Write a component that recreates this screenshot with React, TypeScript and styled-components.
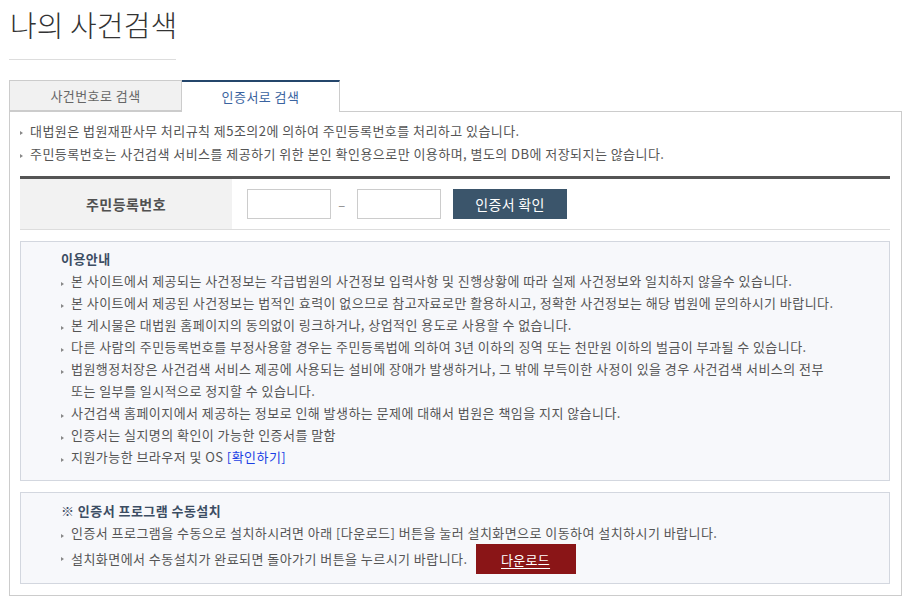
import styled, { createGlobalStyle } from 'styled-components'

const GlobalStyle = createGlobalStyle`
  html, body {
    margin: 0;
    padding: 0;
    background: #fff;
  }
  body {
    font-family: "Noto Sans CJK KR", "Noto Sans", sans-serif;
    color: #555;
  }
`

const notices = [
  '대법원은 법원재판사무 처리규칙 제5조의2에 의하여 주민등록번호를 처리하고 있습니다.',
  '주민등록번호는 사건검색 서비스를 제공하기 위한 본인 확인용으로만 이용하며, 별도의 DB에 저장되지는 않습니다.',
]

const guides = [
  '본 사이트에서 제공되는 사건정보는 각급법원의 사건정보 입력사항 및 진행상황에 따라 실제 사건정보와 일치하지 않을수 있습니다.',
  '본 사이트에서 제공된 사건정보는 법적인 효력이 없으므로 참고자료로만 활용하시고, 정확한 사건정보는 해당 법원에 문의하시기 바랍니다.',
  '본 게시물은 대법원 홈페이지의 동의없이 링크하거나, 상업적인 용도로 사용할 수 없습니다.',
  '다른 사람의 주민등록번호를 부정사용할 경우는 주민등록법에 의하여 3년 이하의 징역 또는 천만원 이하의 벌금이 부과될 수 있습니다.',
]

export default function App() {
  return (
    <Page>
      <GlobalStyle />
      <Title>나의 사건검색</Title>
      <TitleRule />

      <Tabs>
        <Tab>사건번호로 검색</Tab>
        <Tab $active>인증서로 검색</Tab>
      </Tabs>

      <Panel>
        <NoticeList>
          {notices.map((n) => (
            <Item key={n}>{n}</Item>
          ))}
        </NoticeList>

        <FormTable>
          <Label>주민등록번호</Label>
          <Field>
            <Input />
            <Dash>–</Dash>
            <Input />
            <ConfirmButton>인증서 확인</ConfirmButton>
          </Field>
        </FormTable>

        <InfoBox $top={6} $bottom={12}>
          <BoxTitle>이용안내</BoxTitle>
          <List>
            {guides.map((g) => (
              <Item key={g}>{g}</Item>
            ))}
            <Item>
              법원행정처장은 사건검색 서비스 제공에 사용되는 설비에 장애가 발생하거나, 그 밖에 부득이한 사정이 있을 경우 사건검색 서비스의 전부
              <br />
              또는 일부를 일시적으로 정지할 수 있습니다.
            </Item>
            <Item>사건검색 홈페이지에서 제공하는 정보로 인해 발생하는 문제에 대해서 법원은 책임을 지지 않습니다.</Item>
            <Item>인증서는 실지명의 확인이 가능한 인증서를 말함</Item>
            <Item>
              지원가능한 브라우저 및 OS <CheckLink href="#">[확인하기]</CheckLink>
            </Item>
          </List>
        </InfoBox>

        <InfoBox $top={7} $bottom={9}>
          <BoxTitle>※ 인증서 프로그램 수동설치</BoxTitle>
          <List>
            <Item>인증서 프로그램을 수동으로 설치하시려면 아래 [다운로드] 버튼을 눌러 설치화면으로 이동하여 설치하시기 바랍니다.</Item>
            <Item $withButton>
              설치화면에서 수동설치가 완료되면 돌아가기 버튼을 누르시기 바랍니다.
              <DownloadButton>다운로드</DownloadButton>
            </Item>
          </List>
        </InfoBox>
      </Panel>
    </Page>
  )
}

const Page = styled.div`
  padding: 0 13px 14px 9px;
  letter-spacing: 0.45px;
`

const Title = styled.h1`
  margin: 0;
  padding: 4px 0 0 1px;
  height: 50px;
  font-size: 29px;
  line-height: 40px;
  font-weight: 300;
  letter-spacing: 0.1px;
  color: #333;
`

const TitleRule = styled.div`
  width: 167px;
  height: 1px;
  background: #ddd;
  margin-top: 5px;
`

const Tabs = styled.div`
  display: flex;
  margin-top: 20px;
`

const Tab = styled.div<{ $active?: boolean }>`
  box-sizing: border-box;
  width: ${(p) => (p.$active ? '158px' : '173px')};
  height: ${(p) => (p.$active ? '32px' : '31px')};
  margin-bottom: ${(p) => (p.$active ? '-1px' : '0')};
  display: flex;
  align-items: center;
  justify-content: center;
  font-size: 13px;
  background: ${(p) => (p.$active ? '#fff' : '#f1f1f1')};
  color: ${(p) => (p.$active ? '#3a63a0' : '#666')};
  border: 1px solid #ccc;
  border-left: ${(p) => (p.$active ? 'none' : '1px solid #ccc')};
  border-top: ${(p) => (p.$active ? '2px solid #24466b' : '1px solid #ccc')};
  border-bottom: ${(p) => (p.$active ? 'none' : '1px solid #ccc')};
  padding-bottom: ${(p) => (p.$active ? '2px' : '0')};
  position: relative;
`

const Panel = styled.div`
  box-sizing: border-box;
  width: 893px;
  border: 1px solid #ccc;
  padding: 7px 11px 11px 10px;
`

const NoticeList = styled.ul`
  list-style: none;
  margin: 0;
  padding: 0;
  font-size: 13px;
  line-height: 23px;
`

const Item = styled.li<{ $withButton?: boolean }>`
  position: relative;
  padding-left: 10px;
  font-size: 13px;
  color: #555;
  display: ${(p) => (p.$withButton ? 'flex' : 'block')};
  align-items: center;
  margin-top: ${(p) => (p.$withButton ? '0' : '0')};

  &::before {
    content: '';
    position: absolute;
    left: 0;
    top: ${(p) => (p.$withButton ? '13px' : '12px')};
    border-left: 3px solid #888;
    border-top: 2.5px solid transparent;
    border-bottom: 2.5px solid transparent;
  }
`

const FormTable = styled.div`
  display: flex;
  margin-top: 11px;
  border-top: 3px solid #555;
  border-bottom: 1px solid #ddd;
  height: 50px;
`

const Label = styled.div`
  width: 212px;
  background: #f2f2f2;
  display: flex;
  align-items: center;
  justify-content: center;
  font-size: 14px;
  font-weight: 700;
  color: #505050;
`

const Field = styled.div`
  display: flex;
  align-items: center;
  padding-left: 15px;
`

const Input = styled.input`
  box-sizing: border-box;
  width: 84px;
  height: 30px;
  border: 1px solid #ccc;
  margin: 0;
  padding: 0 6px;
  outline: none;
`

const Dash = styled.span`
  width: 22px;
  margin-right: 4px;
  text-align: center;
  color: #888;
  font-size: 13px;
`

const ConfirmButton = styled.button`
  width: 114px;
  height: 30px;
  margin-left: 12px;
  border: none;
  background: #3b556b;
  color: #fff;
  font-family: inherit;
  font-size: 14px;
  letter-spacing: 0.3px;
  cursor: pointer;
`

const InfoBox = styled.div<{ $top: number; $bottom: number }>`
  margin-top: 11px;
  border: 1px solid #d3d7df;
  background: #f7f8fb;
  padding: ${(p) => p.$top}px 20px ${(p) => p.$bottom}px 40px;
`

const BoxTitle = styled.div`
  height: 22px;
  overflow: hidden;
  font-size: 13px;
  font-weight: 700;
  line-height: 22px;
  color: #3c4d63;
`

const List = styled.ul`
  list-style: none;
  margin: 0;
  padding: 0;
  line-height: 22px;
`

const CheckLink = styled.a`
  color: #1b3fe4;
  text-decoration: none;
`

const DownloadButton = styled.button`
  width: 100px;
  height: 30px;
  margin-left: 8px;
  border: none;
  background: #8a1517;
  color: #fff;
  font-family: inherit;
  font-size: 13px;
  letter-spacing: 0.3px;
  text-decoration: underline;
  text-underline-offset: 3px;
  cursor: pointer;
`
